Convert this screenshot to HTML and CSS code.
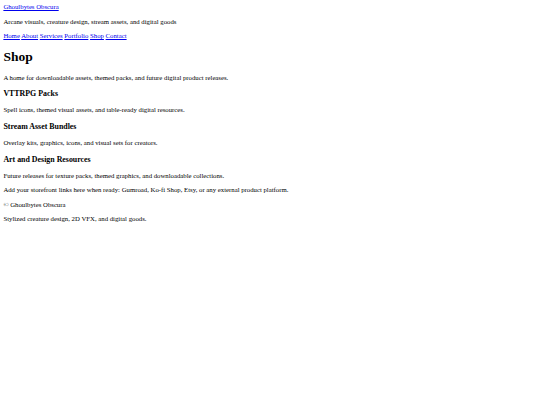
FILE: index.html
```html
<!DOCTYPE html>
<html lang="en">
<head>
<meta charset="utf-8">
<title>Shop | Ghoulbytes Obscura</title>
<link rel="stylesheet" href="styles.css">
</head>
<body class="site">
<header class="site-header">
  <a class="brand" href="#">Ghoulbytes Obscura</a>
  <p class="tagline">Arcane visuals, creature design, stream assets, and digital goods</p>
  <nav class="site-nav">
    <a href="#">Home</a>
    <a href="#">About</a>
    <a href="#">Services</a>
    <a href="#">Portfolio</a>
    <a href="#">Shop</a>
    <a href="#">Contact</a>
  </nav>
</header>
<main class="content">
  <h1 class="page-title">Shop</h1>
  <p class="intro">A home for downloadable assets, themed packs, and future digital product releases.</p>
  <section class="category">
    <h3 class="category-title">VTTRPG Packs</h3>
    <p class="category-text">Spell icons, themed visual assets, and table-ready digital resources.</p>
  </section>
  <section class="category">
    <h3 class="category-title">Stream Asset Bundles</h3>
    <p class="category-text">Overlay kits, graphics, icons, and visual sets for creators.</p>
  </section>
  <section class="category">
    <h3 class="category-title">Art and Design Resources</h3>
    <p class="category-text">Future releases for texture packs, themed graphics, and downloadable collections.</p>
  </section>
  <p class="note">Add your storefront links here when ready: Gumroad, Ko-fi Shop, Etsy, or any external product platform.</p>
</main>
<footer class="site-footer">
  <p class="copyright">&copy; Ghoulbytes Obscura</p>
  <p class="footer-tag">Stylized creature design, 2D VFX, and digital goods.</p>
</footer>
</body>
</html>
```

FILE: styles.css
```css
html {
  background: #ffffff;
}

.site {
  margin: 3.375px;
  font-family: "Liberation Serif", "Times New Roman", serif;
  font-size: 6.75px;
  line-height: 1.149;
  color: #000000;
}

.brand,
.site-nav a {
  color: #0000ee;
  text-decoration: underline;
}

.tagline,
.intro,
.category-text,
.note,
.copyright,
.footer-tag {
  margin: 6.75px 0;
}

.page-title {
  font-size: 13.5px;
  font-weight: bold;
  margin: 9.045px 0;
}

.category-title {
  font-size: 7.9px;
  font-weight: bold;
  margin: 7.9px 0;
}
```
